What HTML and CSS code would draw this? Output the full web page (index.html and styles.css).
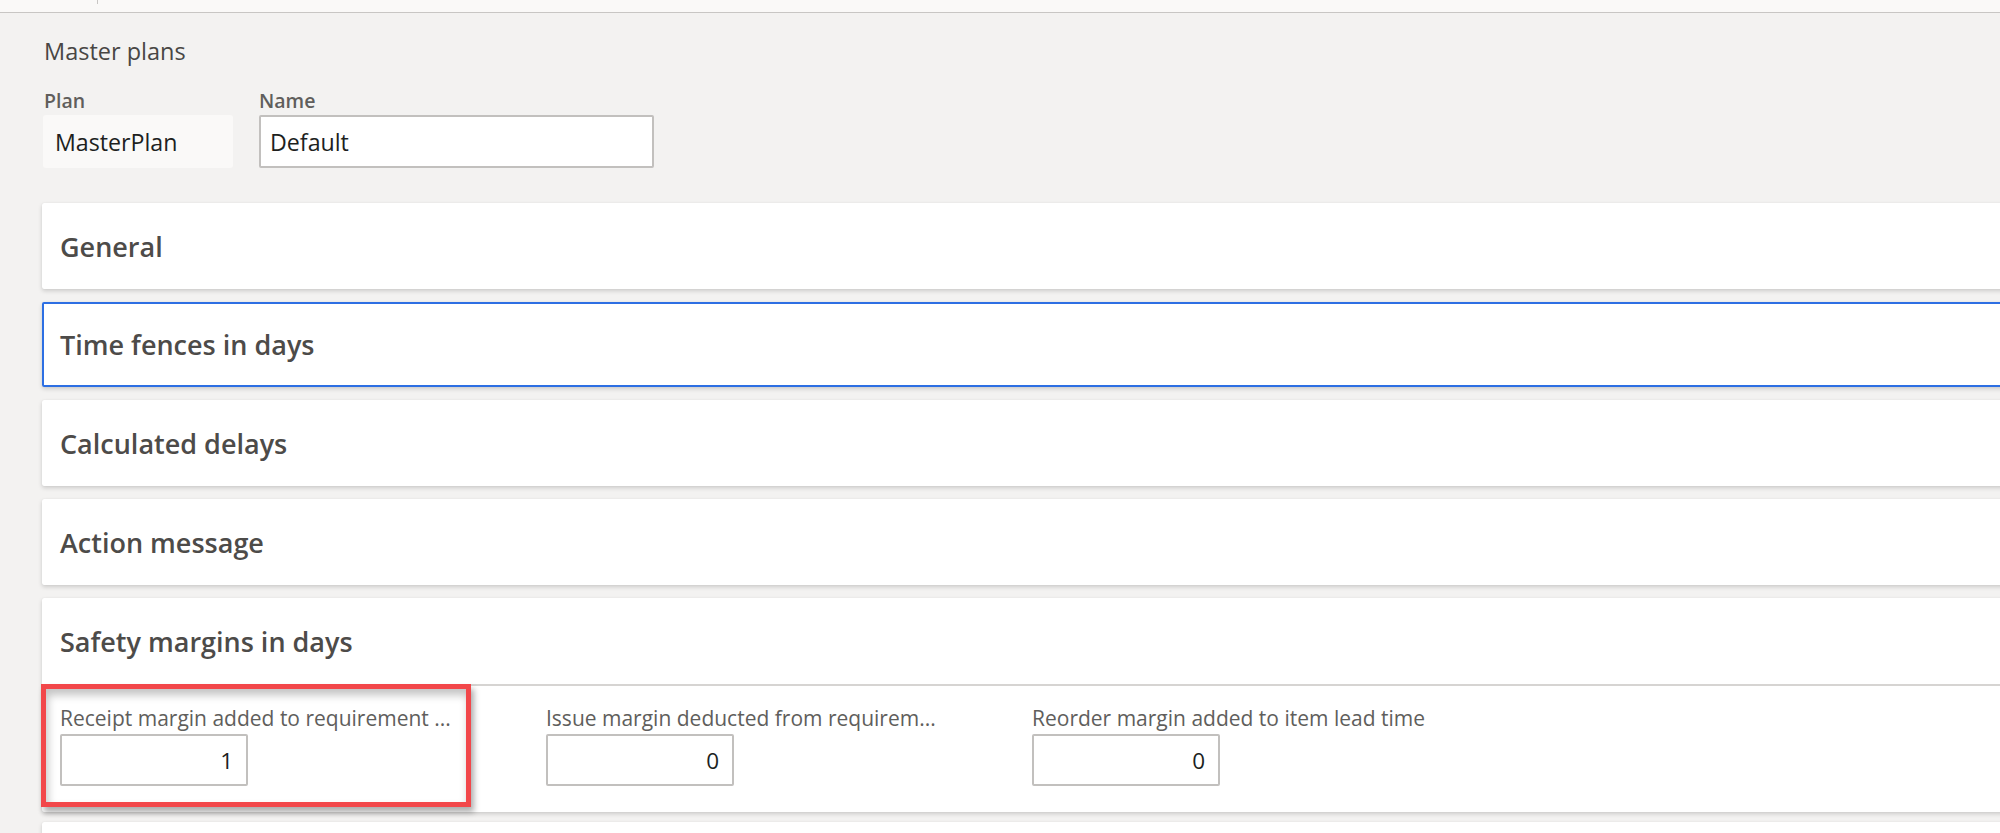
FILE: index.html
```html
<!DOCTYPE html>
<html lang="en">
<head>
<meta charset="utf-8">
<title>Master plans</title>
<link rel="stylesheet" href="styles.css">
</head>
<body>
<div class="topbar"><span class="tab-sep"></span></div>
<main class="page">
  <div class="page-title">Master plans</div>
  <div class="header-fields">
    <div class="hfield plan-field">
      <div class="hlabel">Plan</div>
      <div class="readonly plan-box">MasterPlan</div>
    </div>
    <div class="hfield">
      <div class="hlabel">Name</div>
      <div class="textbox name-box">Default</div>
    </div>
  </div>

  <section class="card"><div class="card-head">General</div></section>
  <section class="card focused"><div class="card-head">Time fences in days</div></section>
  <section class="card"><div class="card-head">Calculated delays</div></section>
  <section class="card"><div class="card-head">Action message</div></section>
  <section class="card expanded">
    <div class="card-head">Safety margins in days</div>
    <div class="card-body">
      <div class="field">
        <div class="flabel">Receipt margin added to requirement ...</div>
        <div class="numbox">1</div>
      </div>
      <div class="field">
        <div class="flabel">Issue margin deducted from requirem...</div>
        <div class="numbox">0</div>
      </div>
      <div class="field">
        <div class="flabel">Reorder margin added to item lead time</div>
        <div class="numbox">0</div>
      </div>
    </div>
    <div class="highlight"></div>
  </section>
  <section class="card peek"></section>
</main>
</body>
</html>
```

FILE: styles.css
```css
html, body {
  margin: 0;
  padding: 0;
  height: 833px;
  overflow: hidden;
  background: #f3f2f1;
  font-family: "Open Sans", "Noto Sans", sans-serif;
}

.topbar {
  height: 12px;
  background: #faf9f8;
  border-bottom: 1px solid #c8c6c4;
  position: relative;
}

.tab-sep {
  position: absolute;
  left: 97px;
  top: 0;
  width: 1px;
  height: 4px;
  background: #c8c6c4;
}

.page {
  padding: 23px 0 0 42px;
  height: 798px;
  overflow: hidden;
}

.page-title {
  font-size: 23.5px;
  line-height: 30px;
  color: #484644;
  padding-left: 2px;
}

.header-fields {
  display: flex;
  gap: 26px;
  margin-top: 23px;
}

.hfield {
  display: flex;
  flex-direction: column;
  gap: 2px;
}

.hlabel {
  font-size: 19.5px;
  line-height: 24px;
  font-weight: 600;
  color: #605e5c;
}

.plan-field .hlabel {
  padding-left: 2px;
}

.readonly, .textbox {
  box-sizing: border-box;
  height: 53px;
  display: flex;
  align-items: center;
  font-size: 23.2px;
  color: #201f1e;
}

.plan-box {
  width: 190px;
  margin-left: 1px;
  background: #faf9f8;
  border-radius: 3px;
  padding-left: 12px;
}

.name-box {
  width: 395px;
  background: #ffffff;
  border: 2px solid #c2c0be;
  border-radius: 2px;
  padding-left: 9px;
}

.card {
  position: relative;
  background: #ffffff;
  margin-right: -20px;
  border-radius: 2px;
  box-shadow: 0 2px 4px rgba(0, 0, 0, 0.16), 0 0 1px rgba(0, 0, 0, 0.1);
  margin-bottom: 13px;
}

.header-fields + .card {
  margin-top: 35px;
}

.card-head {
  box-sizing: border-box;
  height: 86px;
  display: flex;
  align-items: center;
  padding-left: 18px;
  font-size: 27px;
  font-weight: 600;
  color: #4d4b49;
}

.card.focused {
  outline: 2px solid #2d6fe3;
  outline-offset: -2px;
}

.card.focused .card-head {
  height: 85px;
}

.card.expanded {
  margin-bottom: 10px;
}

.card.peek {
  height: 40px;
}

.card-body {
  border-top: 2px solid #d6d4d2;
  display: grid;
  grid-template-columns: 486px 486px 486px;
  padding: 19px 0 26px 18px;
}

.field {
  display: flex;
  flex-direction: column;
  gap: 3px;
}

.flabel {
  font-size: 21px;
  line-height: 26px;
  color: #605e5c;
  white-space: nowrap;
}

.numbox {
  box-sizing: border-box;
  width: 188px;
  height: 52px;
  border: 2px solid #c2c0be;
  border-radius: 2px;
  display: flex;
  align-items: center;
  justify-content: flex-end;
  padding-right: 13px;
  font-size: 22.5px;
  color: #201f1e;
}

.highlight {
  position: absolute;
  left: -1px;
  top: 86px;
  width: 430px;
  height: 123px;
  box-sizing: border-box;
  border: 5px solid #f2474a;
  box-shadow: 3px 5px 6px rgba(0, 0, 0, 0.32), inset 2px 6px 8px rgba(0, 0, 0, 0.24);
  pointer-events: none;
}
```
